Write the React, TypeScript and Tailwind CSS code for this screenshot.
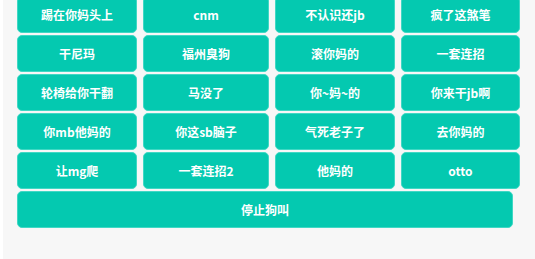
const BUTTONS = [
  "踢在你妈头上",
  "cnm",
  "不认识还jb",
  "疯了这煞笔",
  "干尼玛",
  "福州臭狗",
  "滚你妈的",
  "一套连招",
  "轮椅给你干翻",
  "马没了",
  "你~妈~的",
  "你来干jb啊",
  "你mb他妈的",
  "你这sb脑子",
  "气死老子了",
  "去你妈的",
  "让mg爬",
  "一套连招2",
  "他妈的",
  "otto",
];

const btn =
  "flex items-center justify-center rounded-[5px] border border-[#3fd8c4] bg-[#04c9b0] text-white text-[12px] font-bold leading-none";

export default function App() {
  return (
    <div
      className="flex h-[259px] w-[535px] overflow-hidden bg-white"
      style={{ fontFamily: '"Noto Sans CJK SC", "Noto Sans", sans-serif' }}
    >
      <div className="ml-[3px] flex-1 bg-[#f7f7f7] pl-[14px]">
        <div className="mt-[-4px] flex w-[503px] flex-col gap-[2px]">
          <div className="grid grid-cols-[120px_126px_120px_119px] gap-x-[6px] gap-y-[2px]">
            {BUTTONS.map((label) => (
              <button key={label} className={`${btn} h-[37px]`}>
                {label}
              </button>
            ))}
          </div>
          <button className={`${btn} h-[37px] w-[496px]`}>停止狗叫</button>
        </div>
      </div>
    </div>
  );
}
